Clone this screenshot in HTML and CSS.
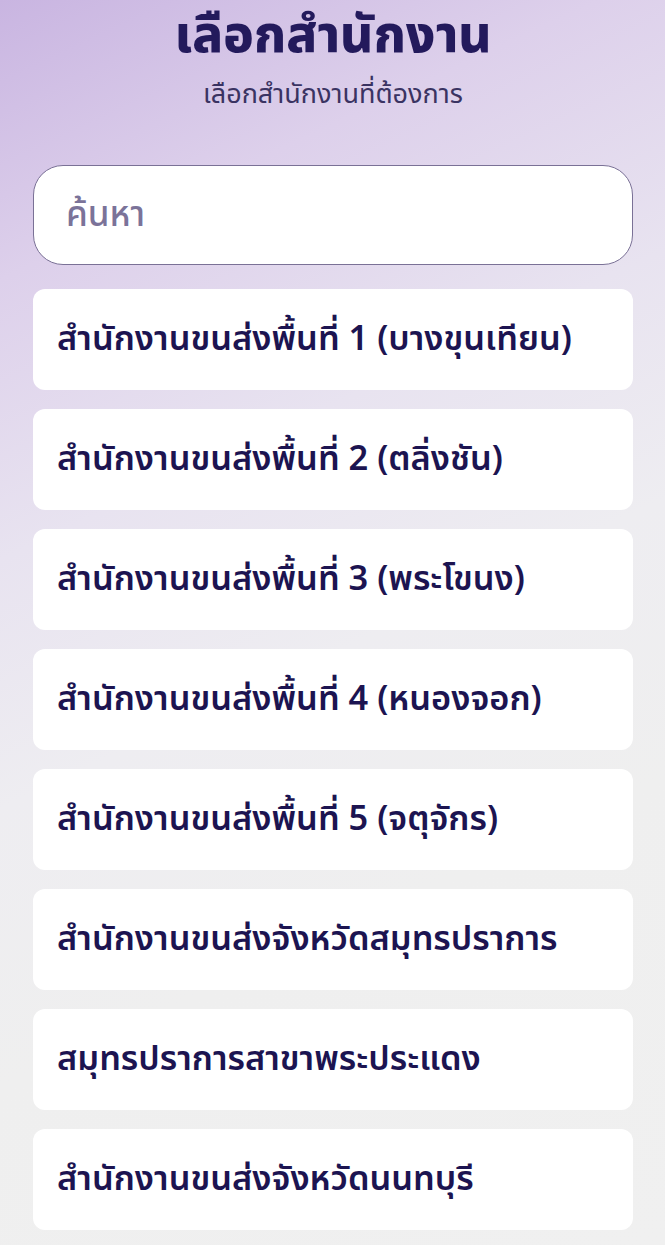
FILE: index.html
```html
<!DOCTYPE html>
<html lang="th">
<head>
<meta charset="utf-8">
<title>เลือกสำนักงาน</title>
<link rel="stylesheet" href="styles.css">
</head>
<body>
<main class="page">
  <header class="head">
    <h1 class="title">เลือกสำนักงาน</h1>
    <p class="subtitle">เลือกสำนักงานที่ต้องการ</p>
  </header>
  <div class="search">
    <input class="search-input" type="text" placeholder="ค้นหา">
  </div>
  <ul class="list">
    <li class="item">สำนักงานขนส่งพื้นที่ 1 (บางขุนเทียน)</li>
    <li class="item">สำนักงานขนส่งพื้นที่ 2 (ตลิ่งชัน)</li>
    <li class="item">สำนักงานขนส่งพื้นที่ 3 (พระโขนง)</li>
    <li class="item">สำนักงานขนส่งพื้นที่ 4 (หนองจอก)</li>
    <li class="item">สำนักงานขนส่งพื้นที่ 5 (จตุจักร)</li>
    <li class="item">สำนักงานขนส่งจังหวัดสมุทรปราการ</li>
    <li class="item">สมุทรปราการสาขาพระประแดง</li>
    <li class="item">สำนักงานขนส่งจังหวัดนนทบุรี</li>
  </ul>
</main>
</body>
</html>
```

FILE: styles.css
```css
html, body {
  margin: 0;
  padding: 0;
}
body {
  width: 665px;
  height: 1245px;
  overflow: hidden;
  font-family: "Noto Sans Thai", "Noto Sans", "DejaVu Sans", sans-serif;
  background: linear-gradient(155deg, #c9b5e1 0%, #ddd0eb 18%, #e8e3f0 36%, #eeedf1 52%, #efefef 70%, #f0f0f0 100%);
}
.page {
  padding: 0 32px 0 33px;
}
.head {
  text-align: center;
  padding-top: 7px;
}
.title {
  margin: 0;
  font-size: 51px;
  line-height: 60px;
  font-weight: 800;
  color: #231a5c;
}
.subtitle {
  margin: 13px 0 0;
  font-size: 27px;
  line-height: 30px;
  font-weight: 400;
  color: #3a3362;
}
.search {
  margin-top: 55px;
}
.search-input {
  box-sizing: border-box;
  display: block;
  width: 100%;
  height: 100px;
  border: 1px solid #7a7196;
  border-radius: 30px;
  background: #fff;
  padding: 0 32px;
  font-family: inherit;
  font-size: 35px;
  font-weight: 500;
  color: #231a5c;
  outline: none;
}
.search-input::placeholder {
  color: #7b7399;
}
.list {
  list-style: none;
  margin: 24px 0 0;
  padding: 0;
  display: flex;
  flex-direction: column;
  gap: 19px;
}
.item {
  box-sizing: border-box;
  height: 101px;
  background: #fff;
  border-radius: 12px;
  padding: 0 24px;
  display: flex;
  align-items: center;
  font-size: 34.4px;
  font-weight: 600;
  color: #1c1451;
}
```
